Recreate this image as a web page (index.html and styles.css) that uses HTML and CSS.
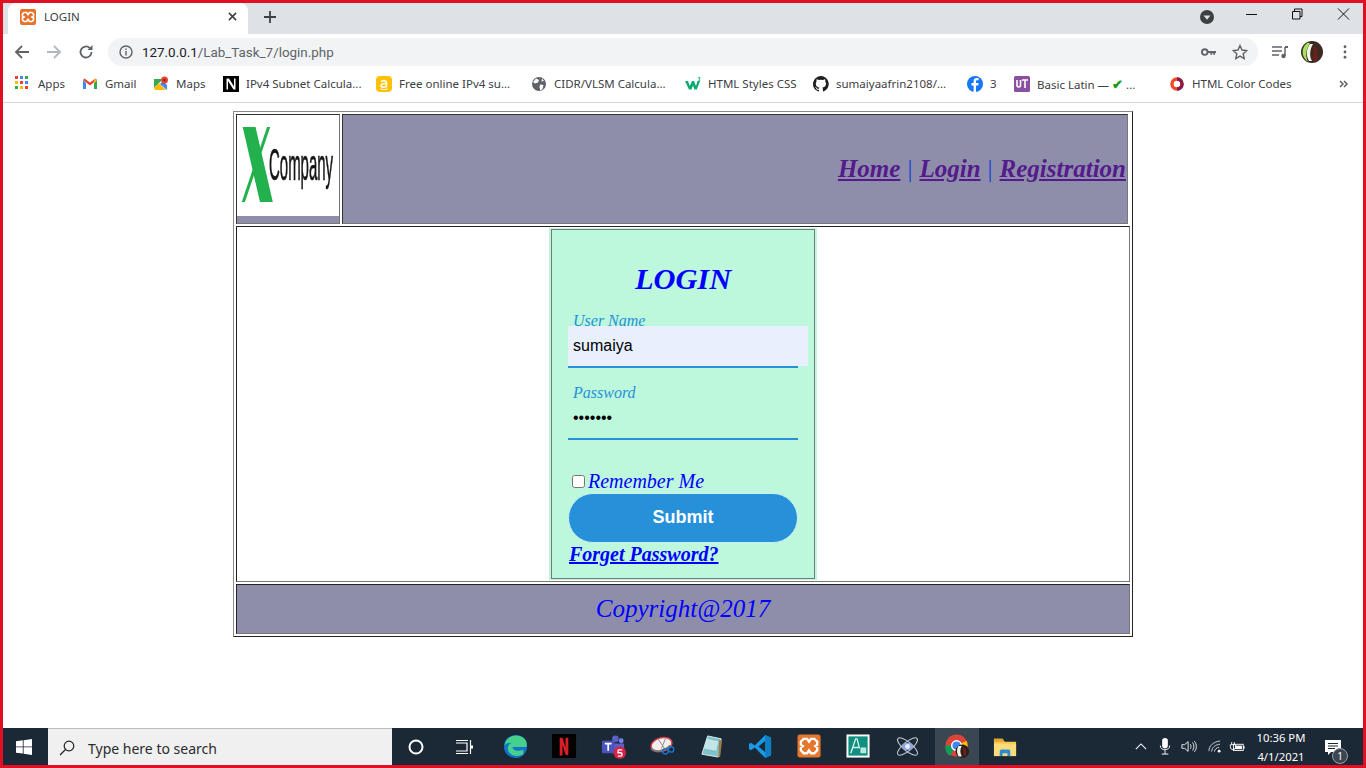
FILE: index.html
```html
<!DOCTYPE html>
<html lang="en">
<head>
<meta charset="utf-8">
<title>LOGIN</title>
<link rel="stylesheet" href="styles.css">
</head>
<body>
<div class="screen">
  <div class="tabstrip">
    <div class="tab">
      <svg class="favicon" viewBox="0 0 16 16"><rect width="16" height="16" rx="2" fill="#e8702a"/><path d="M4 3.500h2.500L8 5.500l1.500-2H12l1.500 1.500v2L12 8l1.500 1v2L12 12.500H9.500L8 10.500l-1.500 2H4L2.500 11V9L4 8 2.500 7V5z" fill="none" stroke="#fff" stroke-width="1.700"/></svg>
      <span class="tab-title">LOGIN</span>
      <svg class="tab-close" viewBox="0 0 10 10"><path d="M1 1l8 8M9 1l-8 8" stroke="#3c4043" stroke-width="1.700"/></svg>
    </div>
    <svg class="newtab" viewBox="0 0 12 12"><path d="M6 0v12M0 6h12" stroke="#3c4043" stroke-width="1.800"/></svg>
    <div class="strip-right">
      <svg class="profile-down" viewBox="0 0 14 14"><circle cx="7" cy="7" r="7" fill="#3c4043"/><path d="M3.500 5.500h7L7 9.800z" fill="#dee1e6"/></svg>
      <svg class="win-btn" viewBox="-3 0 46 20"><path d="M18 10.500h11" stroke="#111" stroke-width="1"/></svg>
      <svg class="win-btn" viewBox="-3 0 46 20"><path d="M18.500 7.500h7.500v7.500h-7.500zM20.500 7.500v-2.500h7.500v7.500h-2" fill="none" stroke="#111"/></svg>
      <svg class="win-btn" viewBox="-3 0 46 20"><path d="M18 4.500l11 11M29 4.500l-11 11" stroke="#111"/></svg>
    </div>
  </div>

  <div class="toolbar">
    <svg class="nav-ico" viewBox="0 0 16 16"><path d="M15 8H2M8 2L2 8l6 6" fill="none" stroke="#5f6368" stroke-width="1.800"/></svg>
    <svg class="nav-ico" viewBox="0 0 16 16"><path d="M1 8h13M8 2l6 6-6 6" fill="none" stroke="#b4b7bb" stroke-width="1.800"/></svg>
    <svg class="nav-ico" viewBox="0 0 16 16"><path d="M13.500 8a5.500 5.500 0 1 1-1.700-4" fill="none" stroke="#5f6368" stroke-width="1.800"/><path d="M14.500 1v5h-5z" fill="#5f6368"/></svg>
    <div class="omnibox">
      <svg class="info" viewBox="0 0 14 14"><circle cx="7" cy="7" r="6" fill="none" stroke="#5f6368" stroke-width="1.400"/><path d="M7 6v4.500M7 3.500v1.500" stroke="#5f6368" stroke-width="1.400"/></svg>
      <span class="url"><span class="host">127.0.0.1</span>/Lab_Task_7/login.php</span>
      <svg class="key" viewBox="0 0 16 10"><circle cx="4" cy="5" r="3" fill="none" stroke="#5f6368" stroke-width="2"/><path d="M7 4h9v2h-1v2h-2V6h-1v2h-2V6H7z" fill="#5f6368"/></svg>
      <svg class="star" viewBox="0 0 16 16"><path d="M8 1.500l2 4.500 4.800.5-3.600 3.200 1 4.800L8 12.100l-4.200 2.400 1-4.800-3.600-3.200L6 6z" fill="none" stroke="#5f6368" stroke-width="1.400"/></svg>
    </div>
    <svg class="media" viewBox="0 0 16 14"><path d="M0 2h10M0 6h10M0 10h7" stroke="#5f6368" stroke-width="1.400"/><path d="M13 2v9" stroke="#5f6368" stroke-width="1.500"/><path d="M13 1h3v2h-3z" fill="#5f6368"/><circle cx="11.500" cy="11" r="2.200" fill="#5f6368"/></svg>
    <svg class="avatar" viewBox="0 0 22 22"><circle cx="11" cy="11" r="11" fill="#3a2a22"/><path d="M7 1.500A11 11 0 0 0 7 20.500c-3-5-2-13 2-18z" fill="#a8e060"/><path d="M9 3c-4 5-4 12-1 17h3c-3-5-2-12 1-17z" fill="#f2f7ea"/><path d="M13 5c3 1 4 5 3 9l1 6h-5z" fill="#6e1f1c"/></svg>
    <svg class="dots" viewBox="0 0 4 16"><circle cx="2" cy="2" r="1.600" fill="#5f6368"/><circle cx="2" cy="8" r="1.600" fill="#5f6368"/><circle cx="2" cy="14" r="1.600" fill="#5f6368"/></svg>
  </div>

  <div class="bookmarks">
    <div class="bm"><svg class="bm-ico" viewBox="0 0 16 16"><g><rect width="3" height="3" fill="#ea4335"/><rect x="5" width="3" height="3" fill="#4285f4"/><rect x="10" width="3" height="3" fill="#34a853"/><rect y="5" width="3" height="3" fill="#fbbc05"/><rect x="5" y="5" width="3" height="3" fill="#ea4335"/><rect x="10" y="5" width="3" height="3" fill="#4285f4"/><rect y="10" width="3" height="3" fill="#34a853"/><rect x="5" y="10" width="3" height="3" fill="#fbbc05"/><rect x="10" y="10" width="3" height="3" fill="#ea4335"/></g></svg><span>Apps</span></div>
    <div class="bm"><svg class="bm-ico" viewBox="0 0 16 16"><path d="M1 4v9h3V7z" fill="#4285f4"/><path d="M12 7v6h3V4z" fill="#34a853"/><path d="M1 4l7 5.500L15 4l-1.500-1.500L8 6.500 2.500 2.500z" fill="#ea4335"/><path d="M12 4.500l1.500-2L15 4l-3 3z" fill="#fbbc05"/></svg><span>Gmail</span></div>
    <div class="bm"><svg class="bm-ico" viewBox="0 0 16 16"><path d="M1 3h9l-9 9z" fill="#34a853"/><path d="M1 12l5-5 7 7H2z" fill="#fbbc05"/><path d="M7 8l3-3 4 4v5z" fill="#4285f4"/><circle cx="11.500" cy="4" r="3.500" fill="#ea4335"/><circle cx="11.500" cy="4" r="1.200" fill="#8c1c13"/></svg><span>Maps</span></div>
    <div class="bm"><svg class="bm-ico" viewBox="0 0 16 16"><rect width="16" height="16" fill="#000"/><path d="M3.500 2.500h2.500l5 8v-8h1.500v11h-2l-5.500-8.500v8.500H3.500z" fill="#fff"/></svg><span>IPv4 Subnet Calcula...</span></div>
    <div class="bm"><svg class="bm-ico" viewBox="0 0 16 16"><rect width="16" height="16" rx="4" fill="#ffc107"/><path d="M5 5.500c1.500-1 5.500-1.200 5.500 1.500v4.500M10.500 8c-2-.7-5.500-.5-5.500 1.600 0 2 4 2.200 5.500 0" fill="none" stroke="#fff" stroke-width="1.500"/><path d="M4.500 12.800c2 1 5 1 7 0" stroke="#fff" fill="none"/></svg><span>Free online IPv4 su...</span></div>
    <div class="bm"><svg class="bm-ico" viewBox="0 0 16 16"><circle cx="8" cy="8" r="7" fill="#5f6368"/><path d="M5 2.500l3 1.500-1 2.500-3 1L2 6zM9 8.500l3.500.5-1 4-2 1.500-1-3zM11 2.500l2 2.500-2.500.5z" fill="#fff"/></svg><span>CIDR/VLSM Calcula...</span></div>
    <div class="bm"><svg class="bm-ico" viewBox="0 0 16 16"><path d="M0 5h3l1.800 5L7 5h2l2 5 1.500-5H15l-3.200 8.500H9.500L8 9.500l-1.500 4H4z" fill="#04aa6d"/><path d="M13 1.500h2v1.200h-1.200l1 .8v1.500h-2" fill="none" stroke="#04aa6d" stroke-width=".7"/></svg><span>HTML Styles CSS</span></div>
    <div class="bm"><svg class="bm-ico" viewBox="0 0 16 16"><path d="M8 0a8 8 0 0 0-2.500 15.600c.4.1.5-.2.5-.4v-1.400c-2.200.5-2.700-1-2.700-1-.4-.9-.9-1.200-.9-1.200-.7-.5.100-.5.100-.5.800.1 1.200.8 1.200.8.700 1.200 1.900.9 2.300.7.100-.5.300-.9.500-1.100-1.800-.2-3.700-.9-3.700-4 0-.9.300-1.600.8-2.100-.1-.2-.4-1 .1-2.100 0 0 .7-.2 2.200.8a7.600 7.600 0 0 1 4 0c1.500-1 2.200-.8 2.200-.8.400 1.100.2 1.900.1 2.100.5.600.8 1.300.8 2.100 0 3.100-1.900 3.700-3.700 3.900.3.300.6.800.6 1.500v2.200c0 .2.100.5.600.4A8 8 0 0 0 8 0z" fill="#1b1f23"/></svg><span>sumaiyaafrin2108/...</span></div>
    <div class="bm"><svg class="bm-ico" viewBox="0 0 16 16"><circle cx="8" cy="8" r="8" fill="#1877f2"/><path d="M9 16V9.500h2.200l.4-2.500H9V5.500c0-.8.3-1.200 1.300-1.200h1.300V2.100c-2.800-.5-5 .1-5 3V7H4.500v2.500h2.100V16z" fill="#fff"/></svg><span>3</span></div>
    <div class="bm"><svg class="bm-ico" viewBox="0 0 16 16"><rect width="16" height="16" rx="1.500" fill="#8a4f9e"/><path d="M3 4v5.500c0 2 3.500 2 3.500 0V4M8 4h6M11 4v8" fill="none" stroke="#fff" stroke-width="1.600"/></svg><span>Basic Latin — <b class="check">✔</b> ...</span></div>
    <div class="bm"><svg class="bm-ico" viewBox="0 0 16 16"><circle cx="8" cy="8" r="5" fill="none" stroke="#ef4b23" stroke-width="3.400"/><path d="M8 3a5 5 0 0 1 0 10" fill="none" stroke="#8a1a4a" stroke-width="3.400"/></svg><span>HTML Color Codes</span></div>
    <svg class="more" viewBox="0 0 10 8"><path d="M1 1l3 3-3 3M5 1l3 3-3 3" fill="none" stroke="#5f6368" stroke-width="1.500"/></svg>
  </div>

  <main class="page">
    <div class="frame">
      <div class="head-row">
        <div class="logo-cell">
          <div class="logo">
            <svg class="logo-art" viewBox="0 0 102 101">
              <defs><clipPath id="logo-clip"><rect x="0" y="12" width="102" height="75"/></clipPath></defs>
              <g class="logo-blur">
                <g clip-path="url(#logo-clip)">
                  <line x1="10.500" y1="5" x2="31" y2="94" stroke="#22b14c" stroke-width="12.500"/>
                  <line x1="34" y1="5" x2="4" y2="94" stroke="#22b14c" stroke-width="3"/>
                </g>
                <text class="logo-text" transform="translate(32 65) scale(.483 1.440)">Company</text>
              </g>
            </svg>
          </div>
        </div>
        <nav class="nav-cell">
          <a class="nav-link" href="#">Home</a>
          <span class="sep">|</span>
          <a class="nav-link" href="#">Login</a>
          <span class="sep">|</span>
          <a class="nav-link" href="#">Registration</a>
        </nav>
      </div>
      <div class="main-cell">
        <div class="form-band">
          <form class="login">
            <h1 class="login-title">LOGIN</h1>
            <div class="field">
              <label class="field-label">User Name</label>
              <input class="field-input autofilled" type="text" value="sumaiya">
            </div>
            <div class="field">
              <label class="field-label">Password</label>
              <input class="field-input" type="password" value="1234567">
            </div>
            <div class="remember"><input type="checkbox"><span>Remember Me</span></div>
            <button class="submit" type="button">Submit</button>
            <a class="forgot" href="#">Forget Password?</a>
          </form>
        </div>
      </div>
      <footer class="foot-cell">Copyright@2017</footer>
    </div>
  </main>

  <div class="taskbar">
    <div class="start"><svg class="win-logo" viewBox="0 0 16 16"><path d="M0 2.300l6.800-1v6.200H0zM7.600 1.200L16 0v7.500H7.600zM0 8.300h6.800v6.300L0 13.700zM7.600 8.300H16V16l-8.400-1.200z" fill="#fff"/></svg></div>
    <div class="search">
      <svg class="search-ico" viewBox="0 0 16 16"><circle cx="10" cy="6" r="4.800" fill="none" stroke="#222" stroke-width="1.200"/><path d="M6.500 9.500L1 15" stroke="#222" stroke-width="1.300"/></svg>
      <span>Type here to search</span>
    </div>
    <div class="apps">
      <div class="app wide"><svg class="tb-ico" viewBox="0 0 22 22"><circle cx="11" cy="11" r="6.500" fill="none" stroke="#fff" stroke-width="2"/></svg></div>
      <div class="app wide"><svg class="tb-ico" viewBox="0 0 22 22"><path d="M3 7h11v8H3M3 4.500h12M3 17.500h12M17.500 4v14" fill="none" stroke="#fff" stroke-width="1.200"/><path d="M17 9.500h3v3h-3z" fill="#fff"/></svg></div>
      <div class="app"><svg class="tb-ico big" viewBox="0 0 26 26"><circle cx="13" cy="13" r="12" fill="#1273c9"/><path d="M1.500 12C3 3 12-.5 19 2.500c5 2 6.500 7 5.500 11H10c0 3.500 5 5.500 11 2.500v5c-7 4-16 1-16-6 0-4 3-6 5-6-4 0-7 1-8.500 3z" fill="#45d08e"/></svg></div>
      <div class="app"><svg class="tb-ico big" viewBox="0 0 26 26"><rect width="25" height="25" fill="#000"/><path d="M8 4h3l3 10V4h3v18l-3-.5-3-10V22l-3 .5z" fill="#d81f26"/></svg></div>
      <div class="app"><svg class="tb-ico big" viewBox="0 0 26 26"><circle cx="15" cy="5" r="3.500" fill="#5b5fc7"/><circle cx="21" cy="7" r="2.500" fill="#7b83eb"/><path d="M13 10h11v8a5 5 0 0 1-11 0z" fill="#5b5fc7"/><rect x="1" y="7" width="13" height="13" rx="1" fill="#4b53bc"/><path d="M4 10h7M7.500 10v7.500" stroke="#fff" stroke-width="1.800"/><circle cx="19.500" cy="19.500" r="6.500" fill="#d92344"/><path d="M22 16.500h-4l-.3 3h2.500a1.500 1.500 0 0 1 0 3.500h-2.700" fill="none" stroke="#fff" stroke-width="1.400"/></svg></div>
      <div class="app"><svg class="tb-ico big" viewBox="0 0 26 26"><ellipse cx="12" cy="11" rx="11" ry="7" transform="rotate(-15 12 11)" fill="#f5f0ee" stroke="#d8434f" stroke-width="1.500"/><path d="M1 15c4 5 14 3 20-3" fill="none" stroke="#777" stroke-width="2"/><path d="M9 6l6 9M16 5l-4 10" stroke="#888"/><circle cx="16" cy="18" r="2.800" fill="none" stroke="#1a73c8" stroke-width="1.500"/><circle cx="22" cy="16" r="2.800" fill="none" stroke="#1a73c8" stroke-width="1.500"/></svg></div>
      <div class="app"><svg class="tb-ico big" viewBox="0 0 26 26"><path d="M9 2l14 3-3 19L3 21z" fill="#7fc3c9"/><path d="M9 2l14 3-3 19L3 21z" fill="none" stroke="#d9eef0"/><path d="M21 6l3 1-2 17-2 0z" fill="#9a7b4a"/><path d="M8 5l12 2.500-2 10L5 15z" fill="#c4e6e8"/></svg></div>
      <div class="app"><svg class="tb-ico big" viewBox="0 0 26 26"><path d="M18 1l6 3v18l-6 3L7 14l-4 3-2-1.500V10.500L3 9l4 3z" fill="#1a9ae6"/><path d="M18 7v12l-7-6z" fill="#1b2836"/><path d="M18 1l6 3v18l-6 3z" fill="#0f7fc4"/></svg></div>
      <div class="app"><svg class="tb-ico big" viewBox="0 0 26 26"><rect x=".5" y=".5" width="24" height="24" rx="2.500" fill="#e8772e"/><path d="M7 5h3.500L12.500 8l2-3H18l3 3v3l-2 1.500 2 1.500v3l-3 3h-3.500l-2-3-2 3H7l-3-3v-3l2-1.500L4 11V8z" fill="none" stroke="#fff" stroke-width="2.400"/></svg></div>
      <div class="app"><svg class="tb-ico big" viewBox="0 0 26 26"><rect x=".5" y=".5" width="24" height="24" fill="#fff"/><rect x="2.500" y="2.500" width="20" height="20" fill="#0e8f7f"/><path d="M5 20L10 5h1.500L14 15M7 14h6" fill="none" stroke="#d7f3ee" stroke-width="1.400"/><rect x="15" y="14" width="6" height="6" fill="#bde8df"/></svg></div>
      <div class="app"><svg class="tb-ico big" viewBox="0 0 26 26"><g fill="none" stroke="#c5ccd4" stroke-width="1.100"><ellipse cx="13" cy="13" rx="13" ry="4.500" transform="rotate(40 13 13)"/><ellipse cx="13" cy="13" rx="13" ry="4.500" transform="rotate(-40 13 13)"/></g><ellipse cx="13" cy="13" rx="6" ry="4" fill="#8da6e0"/><circle cx="13" cy="13" r="2.500" fill="#e8eefb"/></svg></div>
      <div class="app active"><svg class="tb-ico big" viewBox="0 0 26 26"><circle cx="12" cy="12" r="11.500" fill="#db4437"/><path d="M12 12L22.500 7a11.500 11.500 0 0 1-8 16z" fill="#fbbc05"/><path d="M12 12L5 23a11.500 11.500 0 0 1-4.500-11z" fill="#0f9d58"/><circle cx="12" cy="12" r="5" fill="#4285f4" stroke="#fff" stroke-width="1.500"/><circle cx="18" cy="18" r="7" fill="#2a1e1a"/><path d="M14 12.500c-2 3-2 8 .5 11h3c-2-4-2-8 0-11z" fill="#eef5e2"/><path d="M19 13l3 3v6l-3 1z" fill="#6e1f1c"/></svg></div>
      <div class="app"><svg class="tb-ico big" viewBox="0 0 26 26"><path d="M1 5h9l2 3h12v15H1z" fill="#f7c94b"/><path d="M1 5h9l2 3H1z" fill="#e3a92e"/><path d="M1 10h23v13H1z" fill="#fbdb7a"/><path d="M7 23v-5a2 2 0 0 1 2-2h7a2 2 0 0 1 2 2v5h-3v-3h-5v3z" fill="#2a8dd4"/></svg></div>
    </div>
    <div class="tray">
      <svg class="tray-ico up" viewBox="0 0 14 8"><path d="M1 7l6-6 6 6" fill="none" stroke="#fff" stroke-width="1.200"/></svg>
      <svg class="tray-ico mic" viewBox="0 0 12 18"><rect x="3" y="0" width="6" height="11" rx="3" fill="#fff"/><path d="M1 8c0 6 10 6 10 0M6 13v4M2.500 17h7" fill="none" stroke="#fff"/></svg>
      <svg class="tray-ico vol" viewBox="0 0 18 14"><path d="M1 5h3l4-3.500v11L4 9H1z" fill="none" stroke="#fff"/><path d="M10.500 4.500c1 1.500 1 3.500 0 5M13 2.500c2 2.500 2 6.500 0 9M15 1c3 3.500 3 8.500 0 12" fill="none" stroke="#fff"/></svg>
      <svg class="tray-ico wifi" viewBox="0 0 14 14"><path d="M1 12C1 6 6 2 13 1M4 12.500C4 8 8 5 13 4.500M7 12.500C7 10 9.500 8 12 8" fill="none" stroke="#d5d9dc"/><circle cx="12" cy="12" r="1.500" fill="#fff"/></svg>
      <svg class="tray-ico batt" viewBox="0 0 18 12"><path d="M3 1v3M6 1v3M1.500 4h6v2.500a3 3 0 0 1-6 0z" fill="none" stroke="#fff"/><rect x="5" y="3.500" width="11" height="7" fill="none" stroke="#fff"/><rect x="7" y="5" width="7.500" height="4" fill="#fff"/><rect x="16" y="5.500" width="1.500" height="3" fill="#fff"/></svg>
      <div class="clock"><div>10:36 PM</div><div>4/1/2021</div></div>
      <div class="notif">
        <svg class="notif-ico" viewBox="0 0 16 16"><path d="M0 0h16v12H6l-3 3v-3H0z" fill="#fff"/><path d="M3 3.500h10M3 6h10M3 8.500h7" stroke="#1b2836"/></svg>
        <span class="notif-badge">1</span>
      </div>
    </div>
  </div>
</div>
</body>
</html>
```

FILE: styles.css
```css
* { box-sizing: border-box; }
html, body { margin: 0; padding: 0; height: 100%; overflow: hidden; }
body { background: #fff; font-family: "Noto Sans", sans-serif; }
svg { display: block; flex: none; }

.screen {
  width: 1366px;
  height: 768px;
  border: 3px solid #e01024;
  display: flex;
  flex-direction: column;
  background: #fff;
}

/* browser chrome */
.tabstrip {
  height: 31px;
  background: #dee1e6;
  display: flex;
  align-items: flex-start;
  padding-left: 5px;
  flex: none;
}
.tab {
  width: 240px;
  height: 31px;
  background: #fff;
  border-radius: 8px 8px 0 0;
  display: flex;
  align-items: center;
  padding: 0 11px 4px 12px;
}
.favicon { width: 16px; height: 16px; }
.tab-title { font-size: 11.5px; color: #3c4043; margin-left: 8px; flex: 1; }
.tab-close { width: 9px; height: 9px; }
.newtab { width: 12px; height: 12px; margin: 8px 0 0 16px; }
.strip-right { margin-left: auto; display: flex; align-items: flex-start; }
.profile-down { width: 14px; height: 14px; margin: 7px 11px 0 0; }
.win-btn { width: 46px; height: 20px; margin-top: 1px; }

.toolbar {
  height: 36px;
  display: flex;
  align-items: center;
  flex: none;
  padding: 0 0 0 11px;
}
.nav-ico { width: 16px; height: 16px; margin-right: 16px; }
.nav-ico:nth-child(3) { margin-right: 14px; }
.omnibox {
  width: 1150px;
  height: 28px;
  border-radius: 14px;
  background: #f1f3f4;
  display: flex;
  align-items: center;
  padding: 0 10px 0 11px;
}
.info { width: 14px; height: 14px; }
.url { font-family: Roboto, sans-serif; font-size: 13.4px; color: #5f6368; margin-left: 9px; flex: 1; }
.host { color: #202124; }
.key { width: 15px; height: 10px; margin-right: 16px; }
.star { width: 16px; height: 16px; }
.media { width: 16px; height: 14px; margin-left: 14px; }
.avatar { width: 22px; height: 22px; margin-left: 13px; }
.dots { width: 4px; height: 14px; margin-left: 20px; }

.bookmarks {
  height: 33px;
  padding: 0 0 5px 12px;
  border-bottom: 1px solid #d5d6d8;
  flex: none;
  display: grid;
  grid-template-columns: 67px 71px 70px 153px 155px 154px 128px 154px 47px 155px 170px 10px;
  align-items: center;
}
.bm {
  display: flex;
  align-items: center;
  font-size: 11.5px;
  color: #3c4043;
  white-space: nowrap;
  overflow: hidden;
}
.bm-ico { width: 16px; height: 16px; margin-right: 7px; }
.check { color: #1a9c1a; font-size: 13px; }
.more { width: 10px; height: 8px; }

/* page */
.page { flex: 1; padding-top: 8px; min-height: 0; }
.frame {
  width: 900px;
  height: 526px;
  margin: 0 auto;
  border: 1px solid;
  border-color: #8a8a8a #222 #222 #8a8a8a;
  padding: 2px;
  display: flex;
  flex-direction: column;
  gap: 2px;
  font-family: "Liberation Serif", serif;
}
.head-row { display: flex; gap: 2px; height: 110px; margin-right: 2px; flex: none; }
.logo-cell {
  width: 104px;
  background: #8e8eab;
  border: 1px solid;
  border-color: #333 #777 #777 #333;
  flex: none;
}
.logo { height: 101px; background: #fff; }
.logo-art { width: 102px; height: 101px; }
.logo-blur { filter: blur(.5px); }
.logo-text { font-family: "Liberation Sans", sans-serif; font-size: 31px; fill: #151515; stroke: #151515; stroke-width: .5px; }
.nav-cell {
  flex: 1;
  background: #8e8eab;
  border: 1px solid;
  border-color: #333 #777 #777 #333;
  display: flex;
  align-items: center;
  justify-content: flex-end;
  padding-right: 1px;
  gap: 7px;
  font-size: 25px;
}
.nav-link { color: #551a8b; font-weight: bold; font-style: italic; text-decoration: underline; }
.sep { color: #1e40d8; }

.main-cell {
  height: 356px;
  border: 1px solid;
  border-color: #222 #777 #777 #222;
  padding: 1px 0;
  display: flex;
  justify-content: center;
  flex: none;
}
.form-band { background: #bdf7dc; padding: 0 2px; }
.login {
  width: 264px;
  height: 350px;
  margin-top: 1px;
  border: 1px solid #7a7a7a;
  background: #bdf7dc;
  padding: 32px 16px 0;
  display: flex;
  flex-direction: column;
  align-items: flex-start;
}
.login-title {
  margin: 0 0 16px;
  width: 100%;
  height: 34px;
  line-height: 34px;
  font-size: 30.4px;
  font-weight: bold;
  font-style: italic;
  color: #0000ff;
  text-align: center;
}
.field { width: 230px; border-bottom: 2px solid #2691d9; margin-bottom: 16px; flex: none; }
.field-label {
  display: block;
  height: 14px;
  line-height: 18px;
  padding-left: 5px;
  font-size: 16px;
  font-style: italic;
  color: #2691d9;
}
.field-input {
  display: block;
  width: 240px;
  height: 40px;
  padding: 0 5px;
  border: 0;
  outline: 0;
  background: transparent;
  font-family: "Liberation Sans", sans-serif;
  font-size: 16px;
  color: #000;
}
.autofilled { background: #e8f0fe; }
.remember {
  display: flex;
  align-items: center;
  height: 23px;
  margin-top: 14px;
  font-size: 20px;
  line-height: 21px;
  font-style: italic;
  color: #0000ff;
  white-space: nowrap;
}
.remember input { margin: 0 3px 0 4px; width: 13px; height: 13px; }
.submit {
  width: 230px;
  height: 50px;
  padding: 0 0 2px;
  border: 1px solid #cdeef0;
  border-radius: 25px;
  background: #2691d9;
  color: #fff;
  font-family: "Liberation Sans", sans-serif;
  font-size: 18px;
  font-weight: bold;
  flex: none;
}
.forgot {
  margin-left: 1px;
  font-size: 20px;
  line-height: 23px;
  font-weight: bold;
  font-style: italic;
  color: #0000ff;
}
.foot-cell {
  height: 50px;
  background: #8e8eab;
  border: 1px solid;
  border-color: #222 #777 #777 #222;
  display: flex;
  align-items: center;
  justify-content: center;
  font-size: 25px;
  font-style: italic;
  color: #0000ff;
  flex: none;
}

/* taskbar */
.taskbar {
  height: 37px;
  background: #1b2836;
  display: flex;
  align-items: stretch;
  flex: none;
  color: #fff;
}
.start { width: 45px; padding-right: 3px; display: flex; align-items: center; justify-content: center; }
.win-logo { width: 16px; height: 16px; }
.search {
  width: 344px;
  background: #f0f0f0;
  border-top: 1px solid #bdbdbd;
  display: flex;
  align-items: center;
  padding: 2px 0 0 11px;
  color: #2b2b2b;
  font-size: 14px;
}
.search-ico { width: 16px; height: 16px; margin-right: 13px; }
.apps { display: flex; flex: none; }
.app { width: 49px; display: flex; align-items: center; justify-content: center; }
.app.wide { width: 48px; }
.app.wide:nth-child(2) { margin-right: 3px; }
.app.active { background: #3a4752; width: 44px; margin: 0 2px 0 3px; }
.tb-ico { width: 22px; height: 22px; }
.tb-ico.big { width: 25px; height: 25px; }
.tray { margin-left: auto; display: flex; align-items: center; }
.up { width: 12px; height: 7px; margin-right: 12px; }
.mic { width: 12px; height: 17px; margin-right: 10px; }
.vol { width: 16px; height: 13px; margin-right: 11px; }
.wifi { width: 13px; height: 13px; margin-right: 8px; }
.batt { width: 16px; height: 11px; margin-right: 7px; }
.clock { width: 58px; font-family: "Noto Sans", sans-serif; font-size: 11.3px; line-height: 19px; text-align: center; }
.notif { position: relative; width: 30px; height: 28px; margin: 0 9px 0 14px; }
.notif-ico { width: 16px; height: 16px; position: absolute; left: 1px; top: 7px; }
.notif-badge {
  position: absolute;
  left: 8px;
  top: 15px;
  width: 16px;
  height: 16px;
  border-radius: 50%;
  background: #3d4650;
  border: 1px solid #9aa0a6;
  font-size: 10px;
  line-height: 14px;
  text-align: center;
}
```
